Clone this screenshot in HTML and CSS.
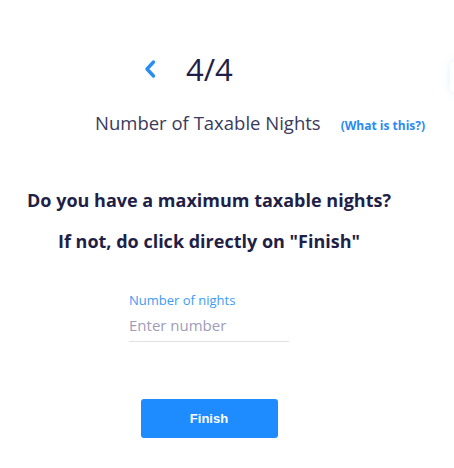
FILE: index.html
```html
<!DOCTYPE html>
<html lang="en">
<head>
  <meta charset="UTF-8" />
  <meta name="viewport" content="width=device-width, initial-scale=1.0"/>
  <title>Taxable Nights</title>
  <link rel="stylesheet" href="styles.css">
</head>
<body>

<div class="page">
  <div class="step-header">
    <button class="back" aria-label="Back">
      <svg width="14" height="20" viewBox="0 0 14 20">
        <path d="M10.5 3 L4 10 L10.5 17" fill="none" stroke="#2a8cf0" stroke-width="3.4" stroke-linecap="round" stroke-linejoin="round"/>
      </svg>
    </button>
    <span class="step">4/4</span>
  </div>

  <div class="subtitle">
    <span class="subtitle-text">Number of Taxable Nights</span>
    <a href="#" class="help">(What is this?)</a>
  </div>

  <p class="question">Do you have a maximum taxable nights?</p>
  <p class="question">If not, do click directly on "Finish"</p>

  <div class="field">
    <label for="nights">Number of nights</label>
    <input type="text" id="nights" placeholder="Enter number" />
  </div>

  <div class="actions">
    <button class="finish">Finish</button>
  </div>
</div>

<div class="side-card"></div>

</body>
</html>
```

FILE: styles.css
```css
body {
  font-family: "Open Sans", Arial, sans-serif;
  background: white;
  margin: 0;
  padding: 0;
  color: #1f1f47;
}
.page {
  width: 418px;
}
.step-header {
  display: flex;
  align-items: center;
  padding: 52px 0 0 143px;
  height: 34px;
}
.back {
  border: none;
  background: none;
  padding: 0;
  margin: 0;
  width: 18px;
  height: 20px;
  display: flex;
  align-items: center;
}
.step {
  margin-left: 25px;
  font-size: 31px;
  color: #1f1f47;
  line-height: 34px;
}
.subtitle {
  display: flex;
  align-items: baseline;
  padding-left: 95px;
  margin-top: 24px;
  width: 340px;
  white-space: nowrap;
}
.subtitle-text {
  font-size: 18.5px;
  color: #3a3a5c;
}
.help {
  margin-left: 20px;
  font-size: 12px;
  font-weight: bold;
  color: #2a8cf0;
  text-decoration: none;
}
.question {
  text-align: center;
  font-size: 18px;
  font-weight: bold;
  color: #1f1f47;
  margin: 0;
}
.question:first-of-type {
  margin-top: 53px;
}
.question + .question {
  margin-top: 17px;
}
.field {
  width: 160px;
  margin: 38px auto 0;
}
.field label {
  display: block;
  font-size: 13px;
  color: #3d9bf5;
}
.field input {
  width: 100%;
  box-sizing: border-box;
  border: none;
  border-bottom: 1px solid #e2e1ea;
  padding: 6px 0 6px;
  font-family: inherit;
  font-size: 15px;
  outline: none;
}
.field input::placeholder {
  color: #a09cb8;
}
.actions {
  display: flex;
  justify-content: center;
  margin-top: 57px;
}
.finish {
  width: 137px;
  height: 39px;
  background-color: #1e8cff;
  color: white;
  border: none;
  border-radius: 3px;
  font-family: "Liberation Sans", Arial, sans-serif;
  font-size: 13px;
  font-weight: bold;
}
.side-card {
  position: fixed;
  top: 62px;
  right: -36px;
  width: 40px;
  height: 30px;
  background: white;
  border-radius: 4px;
  box-shadow: 0 0 8px rgba(80,140,230,0.15);
}
```
